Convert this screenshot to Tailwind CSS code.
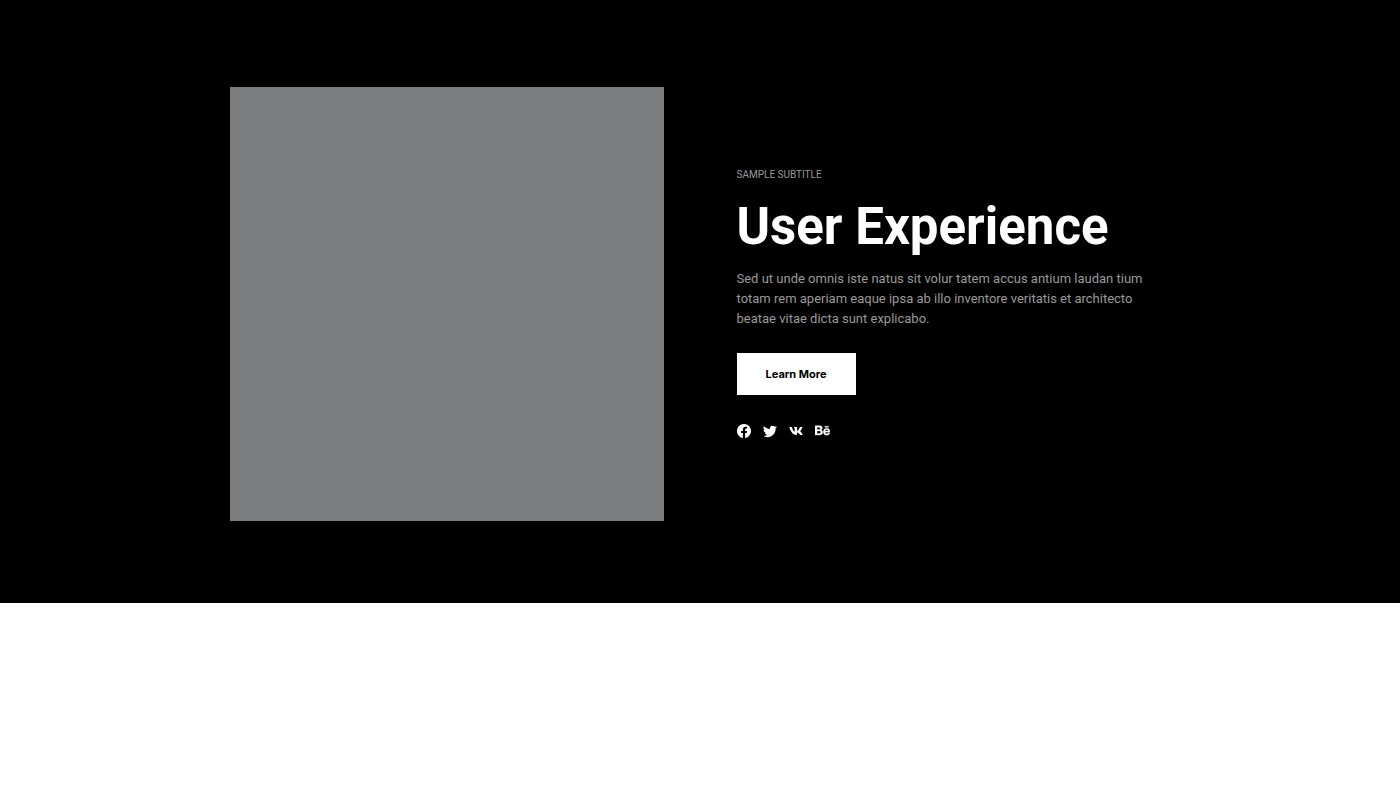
<!DOCTYPE html>
<html lang="en">
<head>
<meta charset="utf-8">
<meta name="viewport" content="width=device-width, initial-scale=1">
<title>User Experience</title>
<script src="https://cdn.jsdelivr.net/npm/@tailwindcss/browser@4"></script>
</head>
<body class="bg-white font-['Roboto','Liberation_Sans',sans-serif]">
<section class="bg-black px-6 pt-[87px] pb-[82px]">
  <div class="mx-auto grid max-w-[940px] items-center gap-[73px] md:grid-cols-2">
    <div class="aspect-square w-full bg-[#7b7c7d]" role="img" aria-label="Placeholder"></div>
    <div class="flex flex-col items-start">
      <p class="text-[10px] leading-4 text-[#999999] uppercase">Sample Subtitle</p>
      <h1 class="mt-[14px] text-[51px] leading-[60px] font-bold whitespace-nowrap text-white">User Experience</h1>
      <p class="mt-3 text-[13px] leading-5 text-[#999999]">Sed ut unde omnis iste natus sit volur tatem accus antium laudan tium totam rem aperiam eaque ipsa ab illo inventore veritatis et architecto beatae vitae dicta sunt explicabo.</p>
      <button type="button" class="mt-6 h-[42px] bg-white px-[29px] font-['Inter',sans-serif] text-[11px] leading-4 font-bold text-black">Learn More</button>
      <nav class="mt-[26px] flex h-5 items-center gap-3" aria-label="Social links">
        <a href="#" aria-label="Facebook"><svg class="size-[14px] fill-white" viewBox="0 0 16 16"><path d="M16 8.049c0-4.446-3.582-8.05-8-8.05C3.58 0-.002 3.603-.002 8.05c0 4.017 2.926 7.347 6.75 7.951v-5.625h-2.03V8.05H6.75V6.275c0-2.017 1.195-3.131 3.022-3.131.876 0 1.791.157 1.791.157v1.98h-1.009c-.993 0-1.303.621-1.303 1.258v1.51h2.218l-.354 2.326H9.25V16c3.824-.604 6.75-3.934 6.75-7.951z"/></svg></a>
        <a href="#" aria-label="Twitter"><svg class="size-[14px] fill-white" viewBox="0 0 16 16"><path d="M5.026 15c6.038 0 9.341-5.003 9.341-9.334 0-.14 0-.282-.006-.422A6.685 6.685 0 0 0 16 3.542a6.658 6.658 0 0 1-1.889.518 3.301 3.301 0 0 0 1.447-1.817 6.533 6.533 0 0 1-2.087.793A3.286 3.286 0 0 0 7.875 6.03a9.325 9.325 0 0 1-6.767-3.429 3.289 3.289 0 0 0 1.018 4.382A3.323 3.323 0 0 1 .64 6.575v.045a3.288 3.288 0 0 0 2.632 3.218 3.203 3.203 0 0 1-.865.115 3.23 3.23 0 0 1-.614-.057 3.283 3.283 0 0 0 3.067 2.277A6.588 6.588 0 0 1 .78 13.58a6.32 6.32 0 0 1-.78-.045A9.344 9.344 0 0 0 5.026 15z"/></svg></a>
        <a href="#" aria-label="VK"><svg class="size-[14px] fill-white" viewBox="0 -32 576 576"><path d="M545 117.7c3.7-12.5 0-21.7-17.8-21.7h-58.9c-15 0-21.9 7.9-25.6 16.7 0 0-30 73.1-72.4 120.5-13.7 13.7-20 18.1-27.5 18.1-3.7 0-9.4-4.4-9.4-16.9V117.7c0-15-4.2-21.7-16.6-21.7h-92.6c-9.4 0-15 7-15 13.5 0 14.2 21.2 17.5 23.4 57.5v86.8c0 19-3.4 22.5-10.9 22.5-20 0-68.6-73.4-97.4-157.4-5.8-16.3-11.5-22.9-26.6-22.9H38.8c-16.8 0-20.2 7.9-20.2 16.7 0 15.6 20 93.1 93.1 195.5C160.4 378.1 229 416 291.4 416c37.5 0 42.1-8.4 42.1-22.9 0-66.8-3.4-73.1 15.4-73.1 8.7 0 23.7 4.4 58.7 38.1 40 40 46.6 57.9 69 57.9h58.9c16.8 0 25.3-8.4 20.4-25-11.2-34.9-86.9-106.7-90.3-111.5-8.7-11.2-6.2-16.2 0-26.2.1-.1 72-101.3 79.4-135.6z"/></svg></a>
        <a href="#" aria-label="Behance"><svg class="size-[15px] fill-white stroke-white stroke-[12]" viewBox="0 -32 576 576"><path d="M232 237.2c31.8-15.2 48.4-38.2 48.4-74 0-70.6-52.6-87.8-113.3-87.8H0v354.4h171.8c64.4 0 124.9-30.9 124.9-102.9 0-44.5-21.1-77.4-64.7-89.7zM77.9 135.9H151c28.1 0 53.4 7.9 53.4 40.5 0 30.1-19.7 42.2-47.5 42.2h-79v-82.7zm83.3 233.7H77.9V272h84.9c34.3 0 56 14.3 56 50.6 0 35.8-25.9 47-57.6 47zm358.5-240.7H376V94h143.7v34.9zM576 305.2c0-75.9-44.4-139.2-124.9-139.2-78.2 0-131.3 58.8-131.3 135.8 0 79.9 50.3 134.7 131.3 134.7 61.3 0 101-27.6 120.1-86.3H509c-6.7 21.9-34.3 33.5-55.7 33.5-41.3 0-63-24.2-63-65.3h185.1c.3-4.2.6-8.7.6-13.2zM390.4 274c2.3-33.7 24.7-54.8 58.5-54.8 35.4 0 53.2 20.8 56.2 54.8H390.4z"/></svg></a>
      </nav>
    </div>
  </div>
</section>
</body>
</html>
